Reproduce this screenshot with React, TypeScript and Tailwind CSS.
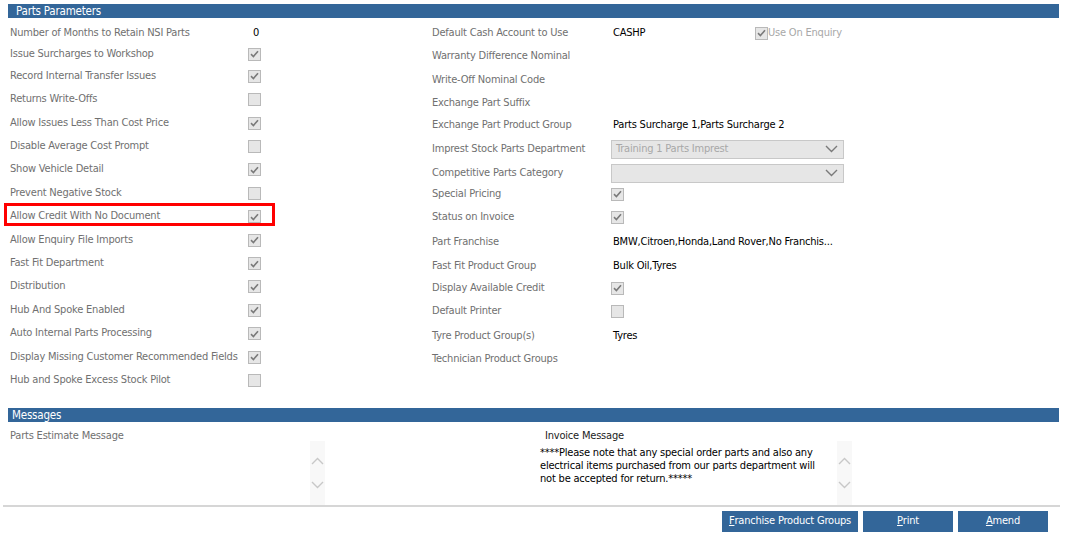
import React from 'react';

const FONT = { fontFamily: '"DejaVu Sans Condensed", "Liberation Sans", sans-serif' };

const Check: React.FC<{ checked?: boolean }> = ({ checked }) => (
  <span className="inline-flex shrink-0 w-[13px] h-[13px] items-center justify-center border border-[#b9b9b9] bg-[#e6e6e6]">
    {checked && (
      <svg width="9" height="8" viewBox="0 0 9 8">
        <path d="M1 4.2 L3.4 6.5 L8 1.2" fill="none" stroke="#7a7a7a" strokeWidth="1.6" />
      </svg>
    )}
  </span>
);

const Chevron: React.FC<{ up?: boolean; color?: string }> = ({ up, color = '#8a8a8a' }) => (
  <svg width="13" height="8" viewBox="0 0 13 8">
    <path d={up ? 'M1 7 L6.5 1.5 L12 7' : 'M1 1 L6.5 6.5 L12 1'} fill="none" stroke={color} strokeWidth="1.4" />
  </svg>
);

type LeftRow = { label: string; value?: string; check?: boolean; h: number; highlight?: boolean };

const leftRows: LeftRow[] = [
  { label: 'Number of Months to Retain NSI Parts', value: '0', h: 22 },
  { label: 'Issue Surcharges to Workshop', check: true, h: 20 },
  { label: 'Record Internal Transfer Issues', check: true, h: 24 },
  { label: 'Returns Write-Offs', check: false, h: 23 },
  { label: 'Allow Issues Less Than Cost Price', check: true, h: 24 },
  { label: 'Disable Average Cost Prompt', check: false, h: 23 },
  { label: 'Show Vehicle Detail', check: true, h: 23 },
  { label: 'Prevent Negative Stock', check: false, h: 24 },
  { label: 'Allow Credit With No Document', check: true, h: 23, highlight: true },
  { label: 'Allow Enquiry File Imports', check: true, h: 24 },
  { label: 'Fast Fit Department', check: true, h: 23 },
  { label: 'Distribution', check: true, h: 23 },
  { label: 'Hub And Spoke Enabled', check: true, h: 24 },
  { label: 'Auto Internal Parts Processing', check: true, h: 23 },
  { label: 'Display Missing Customer Recommended Fields', check: true, h: 24 },
  { label: 'Hub and Spoke Excess Stock Pilot', check: false, h: 23 },
];

type RightRow = { label: string; value?: string; check?: boolean; select?: string; h: number; extra?: boolean };

const rightRows: RightRow[] = [
  { label: 'Default Cash Account to Use', value: 'CASHP', h: 22, extra: true },
  { label: 'Warranty Difference Nominal', h: 24 },
  { label: 'Write-Off Nominal Code', h: 24 },
  { label: 'Exchange Part Suffix', h: 22 },
  { label: 'Exchange Part Product Group', value: 'Parts Surcharge 1,Parts Surcharge 2', h: 22 },
  { label: 'Imprest Stock Parts Department', select: 'Training 1 Parts Imprest', h: 26 },
  { label: 'Competitive Parts Category', select: '', h: 22 },
  { label: 'Special Pricing', check: true, h: 20 },
  { label: 'Status on Invoice', check: true, h: 26 },
  { label: 'Part Franchise', value: 'BMW,Citroen,Honda,Land Rover,No Franchis...', h: 24 },
  { label: 'Fast Fit Product Group', value: 'Bulk Oil,Tyres', h: 24 },
  { label: 'Display Available Credit', check: true, h: 20 },
  { label: 'Default Printer', check: false, h: 26 },
  { label: 'Tyre Product Group(s)', value: 'Tyres', h: 24 },
  { label: 'Technician Product Groups', h: 22 },
];

const Btn: React.FC<{ u: string; rest: string; w: string }> = ({ u, rest, w }) => (
  <button className={`${w} h-[21px] bg-[#336699] text-white text-[11px] flex items-center justify-center whitespace-nowrap`}>
    <span className="underline">{u}</span>
    {rest}
  </button>
);

export default function App() {
  return (
    <div className="w-[1069px] h-[536px] bg-white text-[11px] tracking-[-0.2px] text-[#707070] overflow-hidden relative" style={FONT}>
      <div className="pt-[4px] pl-[8px] pr-[10px]">
        <div className="h-[14px] bg-[#336699] text-white text-[11.5px] leading-[14px] pl-[8px]">Parts Parameters</div>
      </div>

      <div className="flex mt-[4px]">
        {/* left column */}
        <div className="w-[432px] flex flex-col">
          {leftRows.map((r) => (
            <div key={r.label} style={{ height: r.h }} className="flex items-center relative">
              <div className="w-[248px] pl-[10px] whitespace-nowrap">{r.label}</div>
              {r.value !== undefined ? (
                <div className="pl-[5px] text-black">{r.value}</div>
              ) : (
                <Check checked={r.check} />
              )}
              {r.highlight && (
                <div className="absolute left-[4px] top-[-2px] w-[271px] h-[23px] border-[3px] border-[#ff0000]" />
              )}
            </div>
          ))}
        </div>

        {/* right column */}
        <div className="flex-1 flex flex-col">
          {rightRows.map((r) => (
            <div key={r.label} style={{ height: r.h }} className="flex items-center">
              <div className="w-[179px] whitespace-nowrap">{r.label}</div>
              {r.select !== undefined ? (
                <div className="w-[233px] h-[19px] border border-[#c8c8c8] bg-[#e6e6e6] flex items-center justify-between pl-[4px] pr-[5px] text-[#a8a8a8]">
                  <span>{r.select}</span>
                  <Chevron color="#7a7a7a" />
                </div>
              ) : r.check !== undefined ? (
                <Check checked={r.check} />
              ) : (
                <div className={`${r.extra ? 'w-[144px]' : ''} pl-[2px] text-black whitespace-nowrap`}>{r.value}</div>
              )}
              {r.extra && (
                <div className="flex items-center text-[#a8a8a8]">
                  <Check checked />
                  <span>Use On Enquiry</span>
                </div>
              )}
            </div>
          ))}
        </div>
      </div>

      {/* Messages */}
      <div className="pl-[8px] pr-[10px] mt-[16px]">
        <div className="h-[14px] bg-[#336699] text-white text-[11.5px] leading-[14px] pl-[4px]">Messages</div>
      </div>
      <div className="flex pl-[10px] mt-[6px]">
        <div className="w-[530px] flex">
          <div className="w-[300px]">Parts Estimate Message</div>
          <div className="w-[15px] h-[64px] mt-[13px] bg-[#f8f8f8] flex flex-col items-center justify-center gap-[16px]">
            <Chevron up color="#c8c8c8" />
            <Chevron color="#c8c8c8" />
          </div>
        </div>
        <div className="flex">
          <div className="w-[297px]">
            <div className="pl-[5px] text-[#222]">Invoice Message</div>
            <div className="text-black leading-[13px] mt-[1px] w-[285px]">
              ****Please note that any special order parts and also any electrical items purchased from our parts department will not be accepted for return.*****
            </div>
          </div>
          <div className="w-[15px] h-[64px] mt-[13px] bg-[#f8f8f8] flex flex-col items-center justify-center gap-[16px]">
            <Chevron up color="#c8c8c8" />
            <Chevron color="#c8c8c8" />
          </div>
        </div>
      </div>

      <div className="ml-[3px] w-[1057px] h-[2px] bg-[#d6d6d6]" />
      <div className="flex justify-end gap-[5px] pr-[21px] mt-[4px]">
        <Btn u="F" rest="ranchise Product Groups" w="w-[136px]" />
        <Btn u="P" rest="rint" w="w-[90px]" />
        <Btn u="A" rest="mend" w="w-[90px]" />
      </div>
    </div>
  );
}
